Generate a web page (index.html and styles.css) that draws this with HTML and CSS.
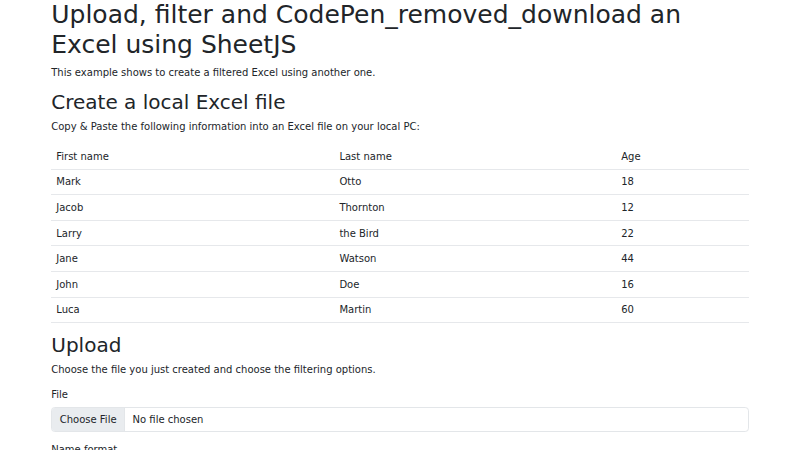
FILE: index.html
```html
<!DOCTYPE html>
<html lang="en">
<head>
<meta charset="utf-8">
<title>Upload, filter and download an Excel using SheetJS</title>
<link rel="stylesheet" href="styles.css">
</head>
<body>
<div class="container">
  <h1>Upload, filter and CodePen_removed_download an Excel using SheetJS</h1>
  <p>This example shows to create a filtered Excel using another one.</p>

  <h2>Create a local Excel file</h2>
  <p>Copy &amp; Paste the following information into an Excel file on your local PC:</p>
  <table class="table">
    <thead>
      <tr><th>First name</th><th>Last name</th><th>Age</th></tr>
    </thead>
    <tbody>
      <tr><td>Mark</td><td>Otto</td><td>18</td></tr>
      <tr><td>Jacob</td><td>Thornton</td><td>12</td></tr>
      <tr><td>Larry</td><td>the Bird</td><td>22</td></tr>
      <tr><td>Jane</td><td>Watson</td><td>44</td></tr>
      <tr><td>John</td><td>Doe</td><td>16</td></tr>
      <tr><td>Luca</td><td>Martin</td><td>60</td></tr>
    </tbody>
  </table>

  <h2>Upload</h2>
  <p>Choose the file you just created and choose the filtering options.</p>
  <div class="field">
    <label class="form-label" for="file">File</label>
    <input class="form-control" type="file" id="file">
  </div>
  <div class="field">
    <label class="form-label" for="fmt">Name format</label>
    <select class="form-select" id="fmt">
      <option>First name Last name</option>
      <option>Last name, First name</option>
    </select>
  </div>
</div>
</body>
</html>
```

FILE: styles.css
```css
html {
  font-size: 10px;
}
*, *::before, *::after {
  box-sizing: border-box;
}
body {
  margin: 0;
  font-family: "DejaVu Sans", "Noto Sans", sans-serif;
  font-size: 1rem;
  line-height: 1.5;
  color: #212529;
  background: #fff;
}
.container {
  max-width: 71.25rem;
  margin: 0 auto;
  padding: 0 0.75rem;
}
h1, h2 {
  margin: 0 0 0.5rem;
  font-weight: 500;
  line-height: 1.2;
}
h1 {
  font-size: 2.5rem;
}
h2 {
  font-size: 2rem;
}
p {
  margin: 0 0 1rem;
}
.table {
  width: 100%;
  border-collapse: collapse;
  margin-bottom: 1rem;
}
.table th,
.table td {
  text-align: left;
  font-weight: normal;
  padding: 0.48rem 0.5rem;
  border-bottom: 1px solid #e6e8eb;
}
.table th:nth-child(1),
.table td:nth-child(1) {
  width: 40.6%;
}
.table th:nth-child(2),
.table td:nth-child(2) {
  width: 40.4%;
}
.field {
  margin-bottom: 1rem;
}
.form-label {
  display: inline-block;
  margin-bottom: 0.5rem;
}
.form-control,
.form-select {
  display: block;
  width: 100%;
  font-family: inherit;
  font-size: 1rem;
  line-height: 1.5;
  color: #212529;
  background: #fff;
  border: 1px solid #e3e6e9;
  border-radius: 0.375rem;
  padding: 0.375rem 0.75rem;
  margin: 0;
  overflow: hidden;
}
.form-control::file-selector-button {
  font-family: inherit;
  font-size: 1rem;
  line-height: 1.5;
  padding: 0.375rem 0.75rem;
  margin: -0.375rem 0.75rem -0.375rem -0.75rem;
  color: #212529;
  background-color: #e9ecef;
  border: 0;
  border-right: 1px solid #e3e6e9;
  border-radius: 0;
}
```
